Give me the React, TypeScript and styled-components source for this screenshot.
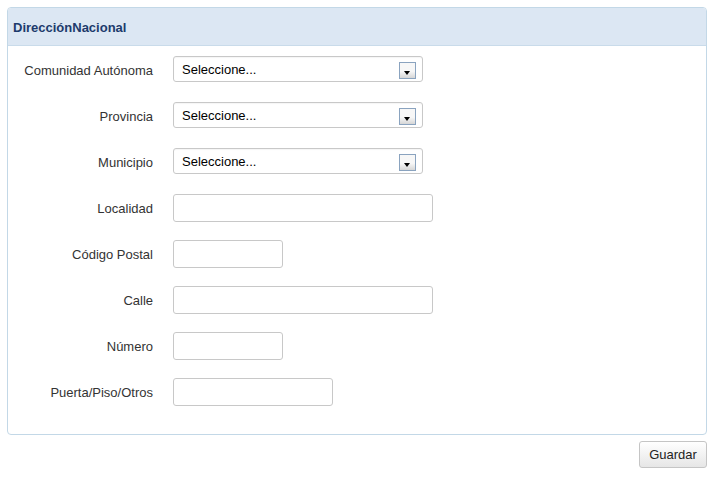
import React from 'react';
import styled, { createGlobalStyle } from 'styled-components';

const fields: { label: string; kind: 'select' | 'text'; width?: number }[] = [
  { label: 'Comunidad Autónoma', kind: 'select' },
  { label: 'Provincia', kind: 'select' },
  { label: 'Municipio', kind: 'select' },
  { label: 'Localidad', kind: 'text', width: 260 },
  { label: 'Código Postal', kind: 'text', width: 110 },
  { label: 'Calle', kind: 'text', width: 260 },
  { label: 'Número', kind: 'text', width: 110 },
  { label: 'Puerta/Piso/Otros', kind: 'text', width: 160 },
];

const App = () => {
  return (
    <>
      <GlobalStyle />
      <Page>
        <Panel>
          <Header>DirecciónNacional</Header>
          <Form>
            {fields.map((f) => (
              <Row key={f.label}>
                <Label>{f.label}</Label>
                {f.kind === 'select' ? (
                  <Select>
                    <span>Seleccione...</span>
                    <ArrowBox />
                  </Select>
                ) : (
                  <TextInput $width={f.width ?? 260} />
                )}
              </Row>
            ))}
          </Form>
        </Panel>
        <Actions>
          <Button>Guardar</Button>
        </Actions>
      </Page>
    </>
  );
};

export default App;

const GlobalStyle = createGlobalStyle`
  body {
    margin: 0;
    background: #fff;
    font-family: "Liberation Sans", Arial, sans-serif;
  }
`;

const Page = styled.div`
  width: 700px;
  padding: 7px 0 0 7px;
`;

const Panel = styled.div`
  border: 1px solid #c3d8e7;
  border-radius: 4px;
  overflow: hidden;
`;

const Header = styled.div`
  height: 37px;
  line-height: 39px;
  padding-left: 5px;
  background: #dce7f3;
  border-bottom: 1px solid #c9dbea;
  font-size: 13px;
  font-weight: bold;
  color: #1d3b6c;
`;

const Form = styled.div`
  display: flex;
  flex-direction: column;
  padding-bottom: 20px;
`;

const Row = styled.div`
  display: grid;
  grid-template-columns: 145px auto;
  column-gap: 20px;
  align-items: center;
  justify-items: start;
  height: 46px;
`;

const Label = styled.label`
  justify-self: end;
  padding-top: 2px;
  font-size: 13px;
  color: #333;
`;

const Select = styled.div`
  box-sizing: border-box;
  width: 250px;
  height: 26px;
  display: flex;
  align-items: center;
  justify-content: space-between;
  padding: 1px 6px 0 8px;
  border: 1px solid #c8c8c8;
  border-radius: 3px;
  background: #fff;
  box-shadow: inset 0 1px 1px rgba(0, 0, 0, 0.04);
  font-size: 13px;
  color: #000;
`;

const ArrowBox = styled.span`
  position: relative;
  box-sizing: border-box;
  width: 17px;
  height: 17px;
  margin-top: 1px;
  border: 1px solid #8aa3bf;
  background: linear-gradient(#f7f7f7 55%, #d6d6d6);

  &::after {
    content: '';
    position: absolute;
    left: 4px;
    bottom: 3px;
    border-left: 3.5px solid transparent;
    border-right: 3.5px solid transparent;
    border-top: 4px solid #000;
  }
`;

const TextInput = styled.input.attrs({ type: 'text' })<{ $width: number }>`
  box-sizing: border-box;
  width: ${(p) => p.$width}px;
  height: 28px;
  margin-top: 1px;
  border: 1px solid #c8c8c8;
  border-radius: 3px;
  background: #fff;
  outline: none;
`;

const Actions = styled.div`
  display: flex;
  justify-content: flex-end;
  padding-top: 6px;
`;

const Button = styled.button`
  width: 68px;
  height: 27px;
  border: 1px solid #c5c5c5;
  border-radius: 3px;
  background: linear-gradient(#ffffff, #e6e6e6);
  font-family: "Liberation Sans", Arial, sans-serif;
  font-size: 13px;
  color: #222;
  padding: 0;
`;
